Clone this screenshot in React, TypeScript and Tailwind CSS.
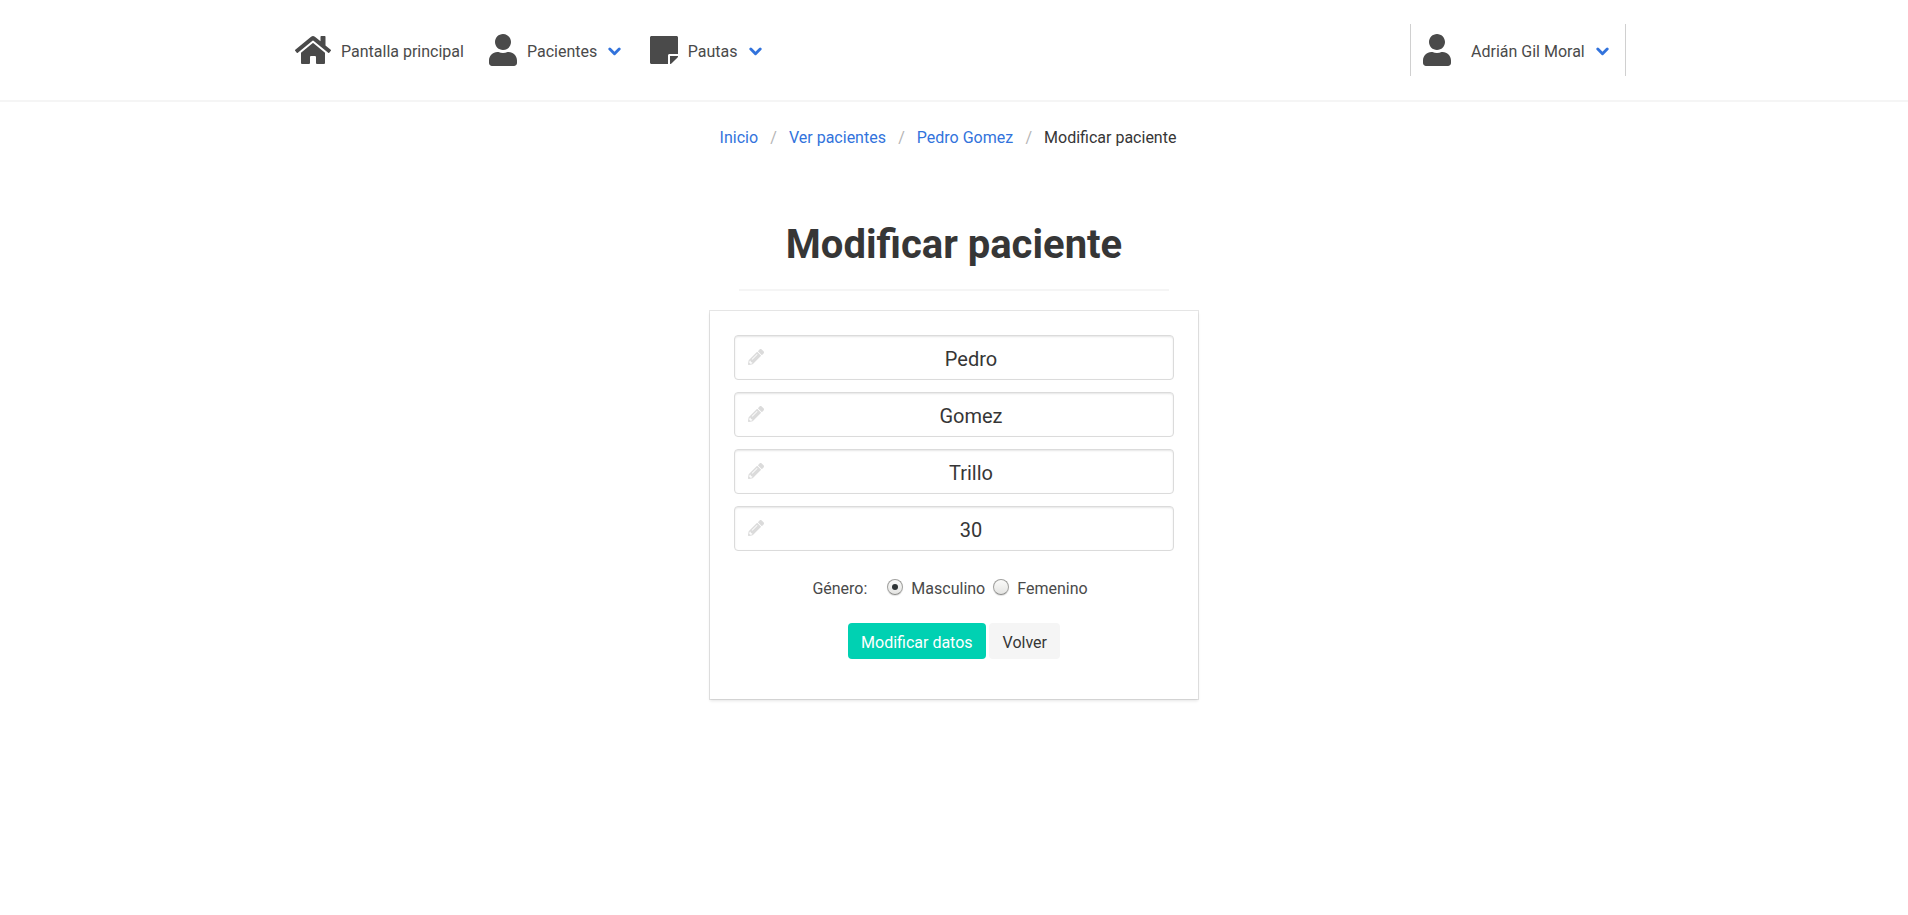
import { FaHome, FaUser, FaStickyNote, FaPencilAlt } from "react-icons/fa";

const crumbs = ["Inicio", "Ver pacientes", "Pedro Gomez"];
const fields = [
  { label: "Nombre", value: "Pedro" },
  { label: "Primer apellido", value: "Gomez" },
  { label: "Segundo apellido", value: "Trillo" },
  { label: "Edad", value: "30" },
];

function Chevron() {
  return (
    <svg viewBox="0 0 13 9" className="mt-[3px] h-[9px] w-[13px] shrink-0" fill="none" stroke="#3273dc">
      <path d="M1.8 2 6.5 6.7l4.7-4.7" strokeWidth="2.9" strokeLinecap="round" strokeLinejoin="round" />
    </svg>
  );
}

function Radio({ label, checked }: { label: string; checked?: boolean }) {
  return (
    <label className="flex items-center">
      <span className="mb-1 flex size-4 items-center justify-center rounded-full border border-[#a0a09e] border-b-[#8c8c8a] bg-linear-to-b from-[#fbfbfa] to-[#e4e4e2] shadow-[0_1px_1px_rgba(0,0,0,0.12)]">
        <input type="radio" name="genero" defaultChecked={checked} className="peer sr-only" />
        <span className="hidden size-1.5 rounded-full bg-[#2e3436] peer-checked:block" />
      </span>
      <span className="ml-2">{label}</span>
    </label>
  );
}

export default function App() {
  return (
    <div className="min-h-[915px] bg-white font-[Roboto,sans-serif] text-base leading-6 text-[#4a4a4a]">
      <header className="h-[102px] border-b-2 border-[#f5f5f5]">
        <nav className="mx-auto flex h-[100px] w-[1344px] items-center justify-between">
          <div className="flex items-center">
            <a className="flex items-center pl-[13px]">
              <FaHome className="h-8 w-9" />
              <span className="ml-[10px] pt-[3px]">Pantalla principal</span>
            </a>
            <a className="ml-[25px] flex items-center">
              <FaUser className="h-8 w-7" />
              <span className="mr-[10.8px] ml-[10px] pt-[3px]">Pacientes</span>
              <Chevron />
            </a>
            <a className="ml-[28.7px] flex items-center">
              <FaStickyNote className="h-8 w-7" />
              <span className="mr-[11.6px] ml-[10px] pt-[3px]">Pautas</span>
              <Chevron />
            </a>
          </div>
          <a className="flex h-[52px] w-[216px] items-center border-x border-[#d0d0d0] pl-3">
            <FaUser className="h-8 w-7" />
            <span className="mr-[10.8px] ml-5 pt-[3px]">Adrián Gil Moral</span>
            <Chevron />
          </a>
        </nav>
      </header>

      <main className="flex flex-col items-center">
        <nav className="mt-6 mr-3 flex h-6">
          {crumbs.map((c) => (
            <span key={c} className="flex">
              <a className="pr-[12.3px] pl-3 text-[#3273dc]">{c}</a>
              <span className="text-[#b5b5b5]">/</span>
            </span>
          ))}
          <span className="px-3 text-[#363636]">Modificar paciente</span>
        </nav>

        <h1 className="mt-[72px] text-[40px] leading-[45px] font-bold text-[#363636]">Modificar paciente</h1>
        <hr className="mt-[22px] h-0.5 w-[430px] border-0 bg-[#f5f5f5]" />

        <form className="mt-5 flex h-[388px] w-[488px] flex-col items-center p-6 shadow-[0_2px_3px_rgba(10,10,10,0.1),0_0_0_1px_rgba(10,10,10,0.1)]">
          <div className="flex w-full flex-col gap-3">
            {fields.map((f) => (
              <div
                key={f.label}
                className="flex h-[45px] items-center rounded-[4px] border border-[#dbdbdb] pr-[11px] pl-[13px] shadow-[inset_0_1px_2px_rgba(10,10,10,0.1)]"
              >
                <FaPencilAlt className="mb-px size-4 shrink-0 text-[#dbdbdb]" />
                <input
                  aria-label={f.label}
                  defaultValue={f.value}
                  className="ml-4 h-full min-w-0 flex-1 bg-transparent pt-0.5 text-center text-xl text-[#363636] outline-none"
                />
              </div>
            ))}
          </div>
          <div className="mt-[26px] mr-2 flex items-center">
            <span className="mr-5">Género:</span>
            <Radio label="Masculino" checked />
            <span className="w-2" />
            <Radio label="Femenino" />
          </div>
          <div className="mt-[22px] flex gap-[3px]">
            <button type="button" className="h-9 rounded-[4px] bg-[#00d1b2] px-[13.5px] pt-[3px] text-white">
              Modificar datos
            </button>
            <button type="button" className="h-9 rounded-[4px] bg-[#f5f5f5] px-[13.5px] pt-[3px] text-[#363636]">
              Volver
            </button>
          </div>
        </form>
      </main>
    </div>
  );
}
